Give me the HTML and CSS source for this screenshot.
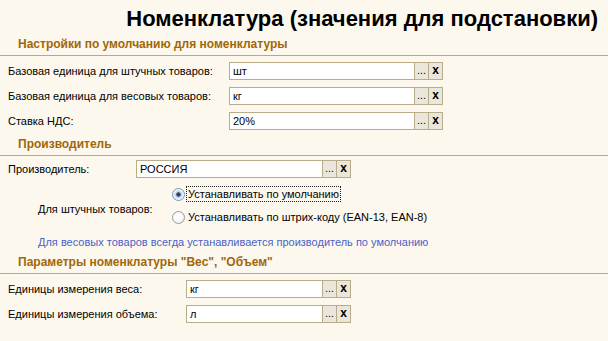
FILE: index.html
```html
<!DOCTYPE html>
<html lang="ru">
<head>
<meta charset="utf-8">
<link rel="stylesheet" href="styles.css">
</head>
<body>
<div class="page">
  <h1 class="title">Номенклатура (значения для подстановки)</h1>

  <div class="section-head">Настройки по умолчанию для номенклатуры</div>
  <div class="rows rows-1">
    <div class="row">
      <span class="label">Базовая единица для штучных товаров:</span>
      <div class="field w185"><div class="box">шт</div><div class="btn dots">...</div><div class="btn clr">x</div></div>
    </div>
    <div class="row">
      <span class="label">Базовая единица для весовых товаров:</span>
      <div class="field w185"><div class="box">кг</div><div class="btn dots">...</div><div class="btn clr">x</div></div>
    </div>
    <div class="row">
      <span class="label">Ставка НДС:</span>
      <div class="field w185"><div class="box">20%</div><div class="btn dots">...</div><div class="btn clr">x</div></div>
    </div>
  </div>

  <div class="section-head sec-2">Производитель</div>
  <div class="rows rows-2">
    <div class="row">
      <span class="label">Производитель:</span>
      <div class="field w186"><div class="box">РОССИЯ</div><div class="btn dots">...</div><div class="btn clr">x</div></div>
    </div>
  </div>
  <div class="radio-group">
    <span class="group-label">Для штучных товаров:</span>
    <div class="radios">
      <div class="radio-row"><span class="radio checked"></span><span class="radio-text focus">Устанавливать по умолчанию</span></div>
      <div class="radio-row"><span class="radio"></span><span class="radio-text">Устанавливать по штрих-коду (EAN-13, EAN-8)</span></div>
    </div>
  </div>
  <div class="note">Для весовых товаров всегда устанавливается производитель по умолчанию</div>

  <div class="section-head sec-3">Параметры номенклатуры "Вес", "Объем"</div>
  <div class="rows rows-3">
    <div class="row">
      <span class="label">Единицы измерения веса:</span>
      <div class="field w136"><div class="box">кг</div><div class="btn dots">...</div><div class="btn clr">x</div></div>
    </div>
    <div class="row">
      <span class="label">Единицы измерения объема:</span>
      <div class="field w136"><div class="box">л</div><div class="btn dots">...</div><div class="btn clr">x</div></div>
    </div>
  </div>
</div>
</body>
</html>
```

FILE: styles.css
```css
html, body {
  margin: 0;
  padding: 0;
  background: #fdf8ee;
}
body {
  width: 608px;
  height: 341px;
  overflow: hidden;
  font-family: "Liberation Sans", Arial, sans-serif;
  font-size: 11px;
  color: #000;
}
.page {
  display: flex;
  flex-direction: column;
}
.title {
  margin: 0;
  height: 36px;
  box-sizing: border-box;
  padding: 7px 10px 0 0;
  text-align: right;
  font-size: 22px;
  line-height: 24px;
  font-weight: bold;
}
.section-head {
  height: 16px;
  line-height: 16px;
  padding: 0 0 3px 18px;
  border-bottom: 1px solid #b3ab8e;
  font-weight: bold;
  font-size: 12px;
  color: #a06708;
}
.sec-2 { margin-top: 6px; }
.sec-3 { margin-top: 4px; }
.rows {
  display: flex;
  flex-direction: column;
  gap: 7px;
  padding-top: 6px;
}
.rows-2 { padding-top: 4px; }
.row {
  display: grid;
  align-items: center;
  height: 18px;
  padding-left: 8px;
}
.rows-1 .row { grid-template-columns: 221px auto; }
.rows-2 .row { grid-template-columns: 128px auto; }
.rows-3 .row { grid-template-columns: 178px auto; }
.label {
  white-space: nowrap;
}
.field {
  display: flex;
  height: 18px;
}
.box {
  box-sizing: border-box;
  height: 18px;
  border: 1px solid #b8ad88;
  background: #fff;
  padding-left: 3px;
  line-height: 16px;
  white-space: nowrap;
}
.w185 .box { width: 186px; }
.w186 .box { width: 187px; }
.w136 .box { width: 137px; }
.btn {
  box-sizing: border-box;
  width: 15px;
  height: 18px;
  margin-left: -1px;
  border: 1px solid #b8ad88;
  background: #ebe6db;
  text-align: center;
  line-height: 15px;
}
.dots {
  font-size: 11px;
}
.clr {
  font-weight: bold;
  font-size: 12px;
}
.radio-group {
  display: flex;
  margin-top: 5px;
}
.group-label {
  width: 134px;
  padding-left: 38px;
  padding-top: 18px;
  line-height: 16px;
  white-space: nowrap;
}
.radios {
  display: flex;
  flex-direction: column;
  gap: 1px;
}
.radio-row {
  display: flex;
  align-items: center;
  height: 22px;
}
.radio {
  box-sizing: border-box;
  width: 13px;
  height: 13px;
  border-radius: 50%;
  border: 1px solid #8f9cab;
  background: radial-gradient(circle at 40% 40%, #ffffff 30%, #e6e6e0 100%);
  margin-right: 1px;
}
.radio.checked {
  border-color: #7b95b8;
  background: radial-gradient(circle, #3a4456 0 1.8px, #b9d0ee 2.6px, #dde8f5 4px, #ffffff 6px);
}
.radio-text {
  line-height: 14px;
  padding: 0 1px;
  border: 1px dotted transparent;
  white-space: nowrap;
}
.radio-text.focus {
  border-color: #222;
}
.note {
  margin-top: 6px;
  padding-left: 38px;
  line-height: 16px;
  color: #4862c6;
  white-space: nowrap;
}
```
